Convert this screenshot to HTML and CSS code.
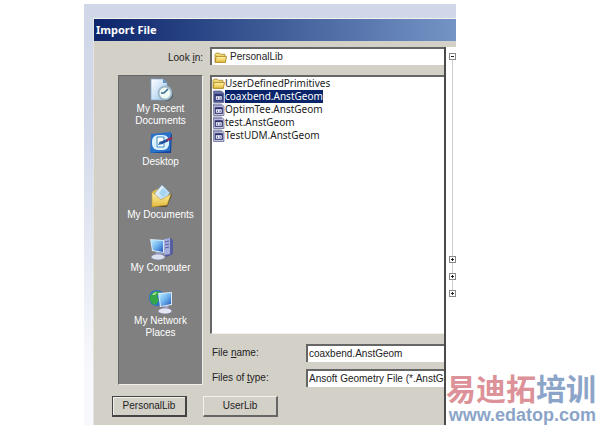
FILE: index.html
```html
<!DOCTYPE html>
<html lang="en">
<head>
  <meta charset="UTF-8" />
  <meta name="viewport" content="width=device-width, initial-scale=1.0"/>
  <title>Import File</title>
  <link rel="stylesheet" href="styles.css">
</head>
<body>

  <!-- Shared icon shapes -->
  <svg class="icon-defs" aria-hidden="true">
    <defs>
      <linearGradient id="screenBlue" x1="0" y1="0" x2="1" y2="1">
        <stop offset="0" stop-color="#c4f0ff"/>
        <stop offset="0.5" stop-color="#6fb4ee"/>
        <stop offset="1" stop-color="#2456b8"/>
      </linearGradient>
      <linearGradient id="folderYellow" x1="0" y1="0" x2="0" y2="1">
        <stop offset="0" stop-color="#fff6a8"/>
        <stop offset="1" stop-color="#e3b93c"/>
      </linearGradient>
      <linearGradient id="paper" x1="0" y1="0" x2="1" y2="1">
        <stop offset="0" stop-color="#ffffff"/>
        <stop offset="1" stop-color="#9cc6ee"/>
      </linearGradient>
      <symbol id="folder" viewBox="0 0 12 12">
        <path d="M1 10V3l1-1h3l1 1h4v2" fill="#f5dc78" stroke="#a98a2c" stroke-width="0.800"/>
        <path d="M1 10.500L2 5h9.500l-1 5.500z" fill="url(#folderYellow)" stroke="#a98220" stroke-width="0.800"/>
      </symbol>
      <symbol id="geometry" viewBox="0 0 12 12">
        <path d="M1.500 1h7l2.500 2v8.500H1.500z" fill="currentColor" stroke="#6a6c92" stroke-width="0.800"/>
        <path d="M2 2.500h7" stroke="#7d80ad"/>
        <rect x="3" y="4.500" width="6.500" height="5" fill="#eef0ff" stroke="#2b2f6b"/>
        <path d="M3 5h6.500" stroke="#2b2f6b" stroke-width="1.500"/>
        <path d="M4.500 7.500h1M7 7.500h1" stroke="#2b2f6b"/>
      </symbol>
    </defs>
  </svg>

  <main class="page">
    <div class="desktop">
      <section class="dialog" aria-labelledby="dialogTitle">
        <h1 class="title-bar" id="dialogTitle">Import File</h1>

        <div class="dialog-body">
          <form class="dialog-form">
            <div class="browser">
              <label class="look-label" for="lookIn">Look <u>i</u>n:</label>
              <div class="field look-field">
                <svg class="file-icon"><use href="#folder"/></svg>
                <select id="lookIn"><option>PersonalLib</option></select>
              </div>

              <nav class="places" aria-label="Places">
                <button type="button" class="place">
                  <svg viewBox="0 0 24 24">
                    <path d="M2 1h12l4 4v17H2z" fill="url(#paper)" stroke="#7ea4cc" stroke-width="0.700"/>
                    <path d="M14 1v4h4z" fill="#5b91c9"/>
                    <circle cx="17" cy="16" r="7" fill="#3e5368"/>
                    <circle cx="16" cy="15" r="7.500" fill="#9fb9c9"/>
                    <circle cx="16" cy="15" r="5.500" fill="#eefaf4"/>
                    <path d="M15 15l4-4M15 15h-3" stroke="#34618b" stroke-width="1.500"/>
                  </svg>
                  <span>My Recent Documents</span>
                </button>
                <button type="button" class="place">
                  <svg viewBox="0 0 24 24">
                    <path d="M3 3h20l-1 19H2z" fill="#17449c"/>
                    <path d="M2 3l20-2-1 19-20 2z" fill="#2a72c8"/>
                    <rect x="3" y="4" width="17" height="15" rx="6" fill="#dcf3ff"/>
                    <path d="M8 6h7v10H8z" fill="#fff" stroke="#3b8ac2"/>
                    <path d="M9 14l2-4 3 3z" fill="#2367ae"/>
                    <path d="M12 12l7-3" stroke="#234c9b" stroke-width="2.500"/>
                    <path d="M18 9l5-2" stroke="#a62643" stroke-width="2"/>
                  </svg>
                  <span>Desktop</span>
                </button>
                <button type="button" class="place">
                  <svg viewBox="0 0 24 24">
                    <path d="M4 23l14 0 5-12-2-2z" fill="#575036"/>
                    <path d="M3 8l5-3 12 6-2 10H3z" fill="#e5bd43"/>
                    <path d="M6 9l7-8 8 8-7 9-8-3z" fill="url(#paper)" stroke="#79a5cc" stroke-width="0.600"/>
                    <path d="M10 9l4-5 4 4-4 5z" fill="#a3d4f1"/>
                    <path d="M3 8l9 8 10-6-4 11-15 2z" fill="url(#folderYellow)" stroke="#c79925" stroke-width="0.600"/>
                  </svg>
                  <span>My Documents</span>
                </button>
                <button type="button" class="place">
                  <svg viewBox="0 0 24 24">
                    <path d="M15 2l7-1 2 2v14l-6 3-3-2z" fill="#575e9d"/>
                    <path d="M15 2l6-1v16l-6 1z" fill="#a6aede"/>
                    <path d="M16 5l4-1M16 8l4-1M16 11l4-1" stroke="#5961a0"/>
                    <path d="M1 2l14 1v13L3 14z" fill="#d7e7f5"/>
                    <path d="M2 3l12 1v11L4 13z" fill="url(#screenBlue)"/>
                    <path d="M7 15h6l1 4H6z" fill="#98a6cd"/>
                    <ellipse cx="9" cy="20" rx="7" ry="3" fill="#dbe0ef" stroke="#7379a1" stroke-width="0.600"/>
                  </svg>
                  <span>My Computer</span>
                </button>
                <button type="button" class="place">
                  <svg viewBox="0 0 24 24">
                    <circle cx="8" cy="8" r="8" fill="#2a70cb"/>
                    <path d="M1 6c3-5 8-6 11-3L8 6l2 4-3 5C2 14 0 11 1 6z" fill="#36a64b"/>
                    <path d="M3 5c1-2 3-3 5-3L6 5z" fill="#a7e68b"/>
                    <path d="M9 3l14-1v13l-12 2z" fill="#dceaf6"/>
                    <path d="M10 4l12-1v11l-10 2z" fill="url(#screenBlue)"/>
                    <path d="M14 16h5l1 4h-6z" fill="#a4a9cd"/>
                    <ellipse cx="16" cy="21" rx="7" ry="3" fill="#e6e6f2" stroke="#73749c" stroke-width="0.600"/>
                  </svg>
                  <span>My Network Places</span>
                </button>
              </nav>

              <div class="files">
                <ul class="file-list" role="listbox" aria-label="Files">
                  <li role="option"><svg class="file-icon"><use href="#folder"/></svg><span>UserDefinedPrimitives</span></li>
                  <li role="option" class="selected" aria-selected="true"><svg class="file-icon"><use href="#geometry"/></svg><span>coaxbend.AnstGeom</span></li>
                  <li role="option"><svg class="file-icon"><use href="#geometry"/></svg><span>OptimTee.AnstGeom</span></li>
                  <li role="option"><svg class="file-icon"><use href="#geometry"/></svg><span>test.AnstGeom</span></li>
                  <li role="option"><svg class="file-icon"><use href="#geometry"/></svg><span>TestUDM.AnstGeom</span></li>
                </ul>
                <div class="file-row">
                  <label for="fileName">File <u>n</u>ame:</label>
                  <div class="field"><input type="text" id="fileName" value="coaxbend.AnstGeom" /></div>
                </div>
                <div class="file-row">
                  <label for="fileType">Files of <u>t</u>ype:</label>
                  <div class="field"><select id="fileType"><option>Ansoft Geometry File (*.AnstGeom)</option></select></div>
                </div>
              </div>
            </div>

            <div class="library-buttons">
              <button type="button" class="btn btn-default">PersonalLib</button>
              <button type="button" class="btn">UserLib</button>
            </div>
          </form>

          <!-- Edge of the project tree behind the dialog -->
          <aside class="tree" aria-label="Project tree">
            <div class="tree-line">
              <button type="button" class="node open" aria-label="Collapse"></button>
              <button type="button" class="node" aria-label="Expand"></button>
              <button type="button" class="node" aria-label="Expand"></button>
              <button type="button" class="node" aria-label="Expand"></button>
            </div>
          </aside>
        </div>
      </section>
    </div>
  </main>

  <div class="watermark">
    <div class="watermark-name" lang="zh"><span>易迪拓</span>培训</div>
    <div class="watermark-url">www.edatop.com</div>
  </div>

</body>
</html>
```
FILE: styles.css
```css
* {
  box-sizing: border-box;
  margin: 0;
  padding: 0;
}

body {
  background: #fff;
  color: #222;
  font-family: "Liberation Sans", Arial, sans-serif;
  font-size: 10px;
  line-height: 12px;
}

button,
input,
select {
  font: inherit;
  color: inherit;
}

.icon-defs {
  position: absolute;
  width: 0;
  height: 0;
}

.page {
  display: flex;
  min-height: 100vh;
  padding: 4px 24% 0 14%;
}

.desktop {
  display: flex;
  flex: 1;
  min-width: 0;
  padding: 14px 0 0 9px;
  background: linear-gradient(#d0d7e9, #d3daeb 30%, #f7f8fc 85%);
}

.dialog {
  display: flex;
  flex: 1;
  flex-direction: column;
  min-width: 0;
  background: #d3d0c8;
  border-top: 1px solid #f3f1ec;
  border-left: 1px solid #e6e4df;
}

.title-bar {
  padding: 0 2px;
  background: linear-gradient(90deg, #0c256b, #7494c5);
  color: #fff;
  font-family: "Noto Sans", Tahoma, sans-serif;
  font-size: 11px;
  font-weight: bold;
  line-height: 22px;
}

.dialog-body {
  display: flex;
  flex: 1;
  padding-top: 6px;
}

.dialog-form {
  flex: 1;
  min-width: 0;
}

.browser {
  display: grid;
  grid-template-columns: 85px minmax(0, 1fr);
  gap: 10px 7px;
  padding-left: 24px;
}

.look-label {
  padding-top: 5px;
  text-align: right;
}

/* Sunken fields */
.field {
  display: flex;
  align-items: center;
  flex: 1;
  min-width: 0;
  height: 18px;
  padding-left: 1px;
  overflow: hidden;
  background: #fff;
  border-top: 2px solid #666;
  border-left: 2px solid #666;
}

.field input,
.field select {
  flex: 1;
  width: 100%;
  min-width: 0;
  appearance: none;
  background: none;
  border: none;
  outline: none;
}

.field select {
  text-overflow: clip;
}

.look-field {
  gap: 3px;
  padding-left: 2px;
}

.file-icon {
  flex: none;
  width: 13px;
  height: 13px;
  color: #c9cce4;
}

/* Places bar */
.places {
  margin-bottom: 2px;
  padding-top: 2px;
  background: #808080;
  border: 1px solid #666;
  border-right-color: #f0eee9;
  border-bottom-color: #f0eee9;
}

.place {
  display: flex;
  flex-direction: column;
  align-items: center;
  width: 100%;
  min-height: 53px;
  background: none;
  border: none;
  color: #fff;
}

.place svg {
  width: 24px;
  height: 24px;
  margin-bottom: 1px;
}

.place span {
  max-width: 70px;
}

/* File list */
.files {
  display: flex;
  flex-direction: column;
  gap: 7px;
  min-width: 0;
}

.file-list {
  height: 259px;
  margin-bottom: 3px;
  background: #fff;
  border-top: 2px solid #666;
  border-left: 2px solid #666;
  border-bottom: 1px solid #f3f1ec;
  font-family: "Noto Sans", Tahoma, sans-serif;
  line-height: 13px;
  list-style: none;
}

.file-list li {
  display: flex;
}

.selected span {
  background: #0a246a;
  color: #fff;
}

.selected .file-icon {
  color: #4c5c9c;
}

.file-row {
  display: flex;
  align-items: center;
}

.file-row label {
  width: 96px;
  padding-left: 2px;
}

/* Library buttons */
.library-buttons {
  display: flex;
  gap: 16px;
  padding: 9px 18px;
}

.btn {
  width: 75px;
  height: 21px;
  background: #d3d0c8;
  border: 1px solid #f3f1ec;
  border-right: 2px solid #666;
  border-bottom: 2px solid #666;
}

.btn-default {
  border: 1px solid #444;
  border-right-width: 2px;
  border-bottom-width: 2px;
  box-shadow: inset 1px 1px #f3f1ec;
}

/* Tree edge */
.tree {
  flex: none;
  width: 12px;
  padding: 6px 0 0 3px;
  background: #fff;
  border-left: 2px solid #4b4b4b;
}

.tree-line {
  display: flex;
  flex-direction: column;
  gap: 10px;
  width: 7px;
  background: linear-gradient(#ccc, #ccc) center / 1px 100% no-repeat;
}

.node {
  width: 7px;
  height: 7px;
  background:
    linear-gradient(#222, #222) center / 3px 1px no-repeat,
    linear-gradient(#222, #222) center / 1px 3px no-repeat,
    #fff;
  border: 1px solid #888;
}

.node.open {
  margin-bottom: 186px;
  background:
    linear-gradient(#222, #222) center / 3px 1px no-repeat,
    #fff;
}

/* Watermark over the lower right corner */
.watermark {
  position: absolute;
  right: 4px;
  bottom: 1px;
  color: #8ba4c8;
  font-weight: bold;
  text-align: right;
}

.watermark-name {
  font-family: "Liberation Sans", "Noto Sans CJK SC", sans-serif;
  font-size: 30px;
  line-height: 32px;
}

.watermark-name span {
  color: #dc9298;
}

.watermark-url {
  font-size: 18px;
  line-height: 18px;
}
```
